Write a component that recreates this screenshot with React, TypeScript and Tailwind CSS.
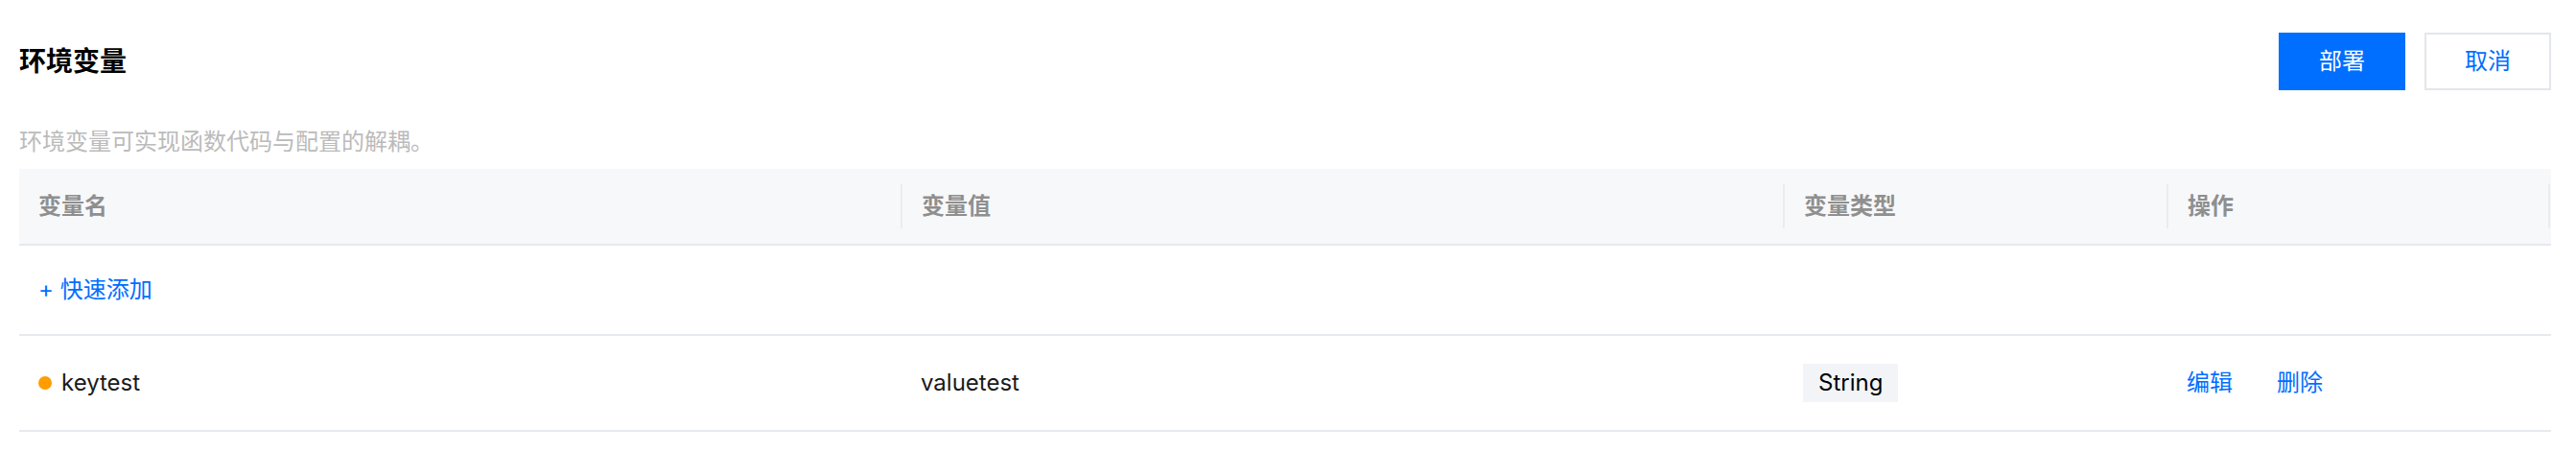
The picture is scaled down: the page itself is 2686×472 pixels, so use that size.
import React from 'react';

const font = { fontFamily: '"Inter", "Noto Sans CJK SC", sans-serif' };

const columns = ['变量名', '变量值', '变量类型', '操作'];

export default function App() {
  const vars = [{ key: 'keytest', value: 'valuetest', type: 'String' }];

  return (
    <div className="bg-white w-[2686px] h-[472px] pl-[20px] pr-[26px] pt-[34px]" style={font}>
      {/* Title bar */}
      <div className="flex items-center justify-between h-[60px]">
        <h1 className="text-[28px] font-bold text-black leading-none">环境变量</h1>
        <div className="flex gap-[20px]">
          <button className="w-[132px] h-[60px] bg-[#006eff] text-white text-[24px]">部署</button>
          <button className="w-[132px] h-[60px] bg-white border-2 border-[#e3e6eb] text-[#006eff] text-[24px]">
            取消
          </button>
        </div>
      </div>

      <p className="mt-[38px] text-[24px] leading-[32px] text-[#bbbbbb]">环境变量可实现函数代码与配置的解耦。</p>

      {/* Table */}
      <div className="mt-[12px]">
        <div className="grid grid-cols-[919px_920px_400px_1fr] h-[80px] bg-[#f7f8fa] border-b-2 border-[#e6e9ee]">
          {columns.map((col, i) => (
            <div key={col} className="flex items-center">
              {i > 0 && <span className="w-[2px] h-[46px] bg-[#eaecf0]" />}
              <span className="pl-[20px] flex-1 text-[24px] font-semibold text-[#8f8f8f]">{col}</span>
              {i === 3 && <span className="w-[2px] h-[46px] bg-[#eaecf0] mr-[1px]" />}
            </div>
          ))}
        </div>

        <div className="h-[94px] flex items-center px-[20px] border-b-2 border-[#e6e9ee]">
          <span className="text-[24px] text-[#006eff]">+ 快速添加</span>
        </div>

        {vars.map((v) => (
          <div
            key={v.key}
            className="grid grid-cols-[919px_920px_400px_1fr] h-[100px] items-center border-b-2 border-[#e6e9ee] text-[24px] text-[#1a1a1a]"
          >
            <div className="flex items-center gap-[10px] pl-[20px]">
              <span className="w-[14px] h-[14px] rounded-full bg-[#ff9d00]" />
              <span>{v.key}</span>
            </div>
            <div className="pl-[21px]">{v.value}</div>
            <div className="pl-[21px]">
              <span className="inline-flex items-center h-[40px] px-[16px] bg-[#f3f4f7] text-black">{v.type}</span>
            </div>
            <div className="pl-[21px] flex gap-[46px] text-[#006eff]">
              <span>编辑</span>
              <span>删除</span>
            </div>
          </div>
        ))}
      </div>
    </div>
  );
}
